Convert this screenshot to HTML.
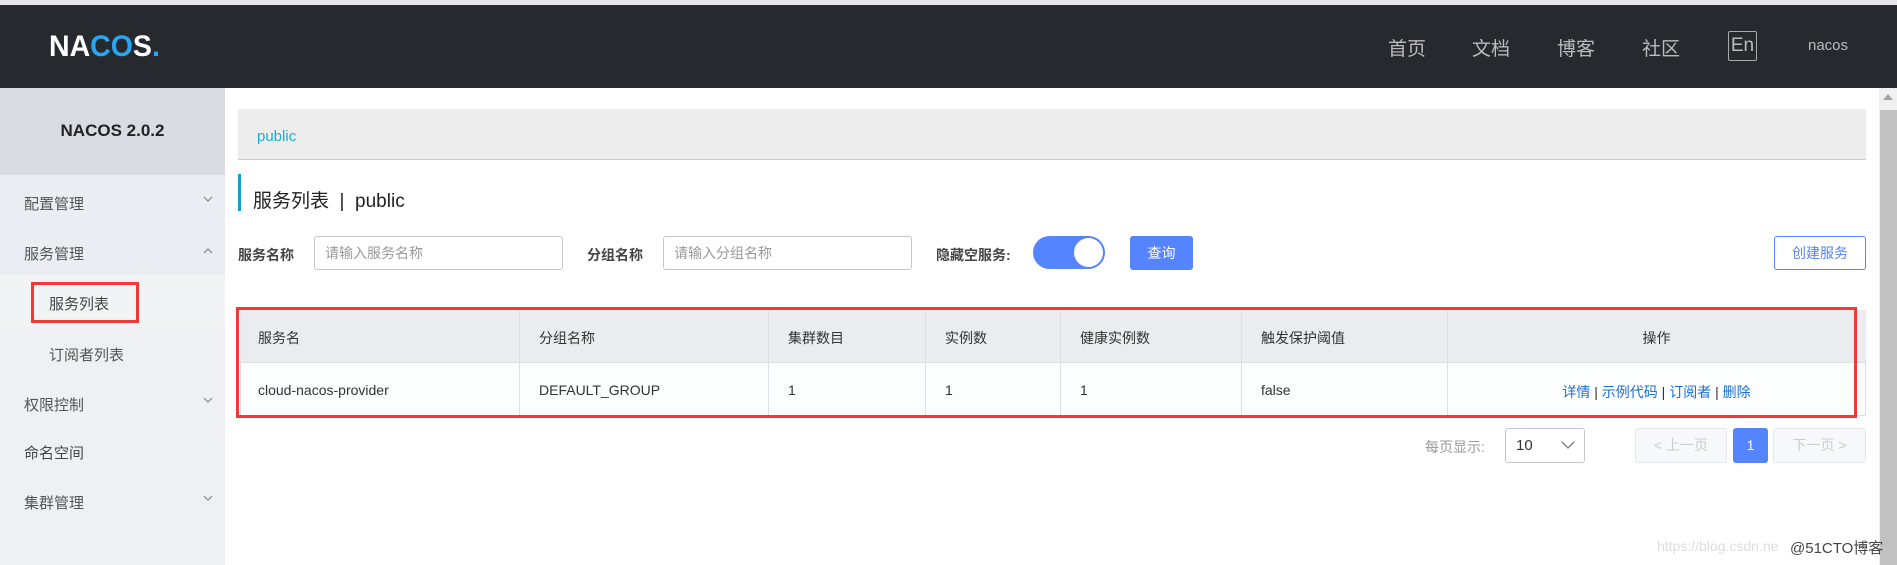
<!DOCTYPE html>
<html><head><meta charset="utf-8"><style>
*{margin:0;padding:0;box-sizing:border-box}
body{width:1897px;height:565px;overflow:hidden;background:#fff;font-family:"Liberation Sans","Noto Sans CJK SC",sans-serif;font-size:14px;color:#333;position:relative}
.a{position:absolute;white-space:nowrap}
.inp{border:1px solid #c4c6cf;border-radius:3px;padding:0 10px;line-height:32px;color:#999;font-size:14px}
</style></head><body>
<div class="a" style="left:0;top:0;width:1897px;height:5px;background:#e6e6e6"></div>
<div class="a" style="left:0;top:5px;width:1897px;height:83px;background:#262a2f"></div>
<div class="a" style="left:49px;top:30px;font-size:30px;font-weight:bold;color:#fff;letter-spacing:0px;transform:scaleX(0.95);transform-origin:left">NA<span style="color:#2aa6f0">CO</span>S<span style="color:#2aa6f0">.</span></div>
<div class="a" style="left:1388px;top:34px;font-size:19px;color:#bbb">首页</div>
<div class="a" style="left:1472px;top:34px;font-size:19px;color:#bbb">文档</div>
<div class="a" style="left:1557px;top:34px;font-size:19px;color:#bbb">博客</div>
<div class="a" style="left:1642px;top:34px;font-size:19px;color:#bbb">社区</div>
<div class="a" style="left:1728px;top:31px;width:29px;height:30px;border:1px solid #aaa;border-radius:2px;color:#bbb;font-size:19px;text-align:center;line-height:27px">En</div>
<div class="a" style="left:1808px;top:37px;font-size:15px;color:#bbb">nacos</div>

<div class="a" style="left:0;top:88px;width:225px;height:477px;background:#eaedf1"></div>
<div class="a" style="left:0;top:88px;width:225px;height:87px;background:#d9dde3"></div>
<div class="a" style="left:0;top:275px;width:225px;height:290px;background:#eef0f3"></div>
<div class="a" style="left:0;top:275px;width:225px;height:52px;background:#f2f3f5"></div>
<div class="a" style="left:0;top:121px;width:225px;text-align:center;font-size:17px;font-weight:bold;color:#222">NACOS 2.0.2</div>
<div class="a" style="left:24px;top:193px;font-size:15px;color:#555">配置管理</div>
<svg class="a" style="left:203px;top:196px" width="10" height="7"><path d="M1 1L5 5L9 1" stroke="#888" fill="none" stroke-width="1.2"/></svg>
<div class="a" style="left:24px;top:243px;font-size:15px;color:#555">服务管理</div>
<svg class="a" style="left:203px;top:247px" width="10" height="7"><path d="M1 6L5 2L9 6" stroke="#888" fill="none" stroke-width="1.2"/></svg>
<div class="a" style="left:31px;top:282px;width:108px;height:41px;border:3px solid #f03a3a"></div>
<div class="a" style="left:49px;top:293px;font-size:15px;color:#444">服务列表</div>
<div class="a" style="left:49px;top:344px;font-size:15px;color:#555">订阅者列表</div>
<div class="a" style="left:24px;top:394px;font-size:15px;color:#555">权限控制</div>
<svg class="a" style="left:203px;top:397px" width="10" height="7"><path d="M1 1L5 5L9 1" stroke="#888" fill="none" stroke-width="1.2"/></svg>
<div class="a" style="left:24px;top:442px;font-size:15px;color:#444">命名空间</div>
<div class="a" style="left:24px;top:492px;font-size:15px;color:#555">集群管理</div>
<svg class="a" style="left:203px;top:495px" width="10" height="7"><path d="M1 1L5 5L9 1" stroke="#888" fill="none" stroke-width="1.2"/></svg>

<div class="a" style="left:1879px;top:88px;width:18px;height:477px;background:#f0f0f0"></div>
<div class="a" style="left:1880px;top:110px;width:17px;height:455px;background:#c1c1c1"></div>
<div class="a" style="left:1883px;top:94px;border:5px solid transparent;border-bottom:6px solid #a3a3a3;border-top:0"></div>

<div class="a" style="left:238px;top:109px;width:1628px;height:51px;background:#ededed;border-bottom:1px solid #ccc"></div>
<div class="a" style="left:257px;top:128px;font-size:15px;color:#19b0d6">public</div>
<div class="a" style="left:238px;top:174px;width:3px;height:37px;background:#1a9bd0"></div>
<div class="a" style="left:253px;top:186px;font-size:19px;color:#222">服务列表 &nbsp;| &nbsp;public</div>

<div class="a" style="left:238px;top:245px;font-size:14px;font-weight:bold;color:#444">服务名称</div>
<div class="a inp" style="left:314px;top:236px;width:249px;height:34px">请输入服务名称</div>
<div class="a" style="left:587px;top:245px;font-size:14px;font-weight:bold;color:#444">分组名称</div>
<div class="a inp" style="left:663px;top:236px;width:249px;height:34px">请输入分组名称</div>
<div class="a" style="left:936px;top:245px;font-size:14px;font-weight:bold;color:#444">隐藏空服务:</div>
<div class="a" style="left:1033px;top:236px;width:72px;height:33px;border-radius:17px;background:#5584ff"></div>
<div class="a" style="left:1074px;top:238px;width:29px;height:29px;border-radius:50%;background:#fff"></div>
<div class="a" style="left:1130px;top:236px;width:63px;height:34px;border-radius:3px;background:#5584ff;color:#fff;text-align:center;line-height:34px">查询</div>
<div class="a" style="left:1774px;top:236px;width:92px;height:34px;border:1px solid #5584ff;border-radius:3px;color:#5584ff;text-align:center;line-height:32px">创建服务</div>

<div class="a" style="left:240px;top:310px;width:1626px;height:106px;border:1px solid #dcdee3;background:#fcfdfd"></div>
<div class="a" style="left:240px;top:310px;width:1626px;height:53px;background:#ebecf0;border-bottom:1px solid #dcdee3"></div>
<div class="a" style="left:519px;top:310px;width:1px;height:106px;background:#dcdee3"></div>
<div class="a" style="left:768px;top:310px;width:1px;height:106px;background:#dcdee3"></div>
<div class="a" style="left:925px;top:310px;width:1px;height:106px;background:#dcdee3"></div>
<div class="a" style="left:1060px;top:310px;width:1px;height:106px;background:#dcdee3"></div>
<div class="a" style="left:1241px;top:310px;width:1px;height:106px;background:#dcdee3"></div>
<div class="a" style="left:1447px;top:310px;width:1px;height:106px;background:#dcdee3"></div>
<div class="a" style="left:258px;top:328px;color:#333">服务名</div>
<div class="a" style="left:539px;top:328px;color:#333">分组名称</div>
<div class="a" style="left:788px;top:328px;color:#333">集群数目</div>
<div class="a" style="left:945px;top:328px;color:#333">实例数</div>
<div class="a" style="left:1080px;top:328px;color:#333">健康实例数</div>
<div class="a" style="left:1261px;top:328px;color:#333">触发保护阈值</div>
<div class="a" style="left:1447px;top:328px;width:419px;text-align:center;color:#333">操作</div>
<div class="a" style="left:258px;top:382px;color:#333">cloud-nacos-provider</div>
<div class="a" style="left:539px;top:382px;color:#333">DEFAULT_GROUP</div>
<div class="a" style="left:788px;top:382px;color:#333">1</div>
<div class="a" style="left:945px;top:382px;color:#333">1</div>
<div class="a" style="left:1080px;top:382px;color:#333">1</div>
<div class="a" style="left:1261px;top:382px;color:#333">false</div>
<div class="a" style="left:1447px;top:382px;width:419px;text-align:center;color:#1a6ed8">详情 <span style="color:#333">|</span> 示例代码 <span style="color:#333">|</span> 订阅者 <span style="color:#333">|</span> 删除</div>
<div class="a" style="left:236px;top:307px;width:1621px;height:111px;border:3px solid #f03a3a"></div>

<div class="a" style="left:1425px;top:437px;color:#999">每页显示:</div>
<div class="a" style="left:1505px;top:428px;width:80px;height:35px;border:1px solid #c4c6cf;border-radius:3px;padding:0 10px;line-height:33px;font-size:15px;color:#333">10</div>
<svg class="a" style="left:1561px;top:441px" width="14" height="9"><path d="M1 1L7 7L13 1" stroke="#777" fill="none" stroke-width="1.3"/></svg>
<div class="a" style="left:1635px;top:428px;width:92px;height:35px;border:1px solid #e6e7eb;border-radius:3px;background:#f7f8fa;color:#ccc;text-align:center;line-height:33px">&lt; 上一页</div>
<div class="a" style="left:1733px;top:428px;width:35px;height:35px;border-radius:3px;background:#5584ff;color:#fff;text-align:center;line-height:35px">1</div>
<div class="a" style="left:1773px;top:428px;width:93px;height:35px;border:1px solid #e6e7eb;border-radius:3px;background:#f7f8fa;color:#ccc;text-align:center;line-height:33px">下一页 &gt;</div>
<div class="a" style="left:1657px;top:538px;font-size:14px;color:#ddd">https://blog.csdn.ne</div>
<div class="a" style="left:1790px;top:537px;font-size:15px;color:#444">@51CTO博客</div>
</body></html>
